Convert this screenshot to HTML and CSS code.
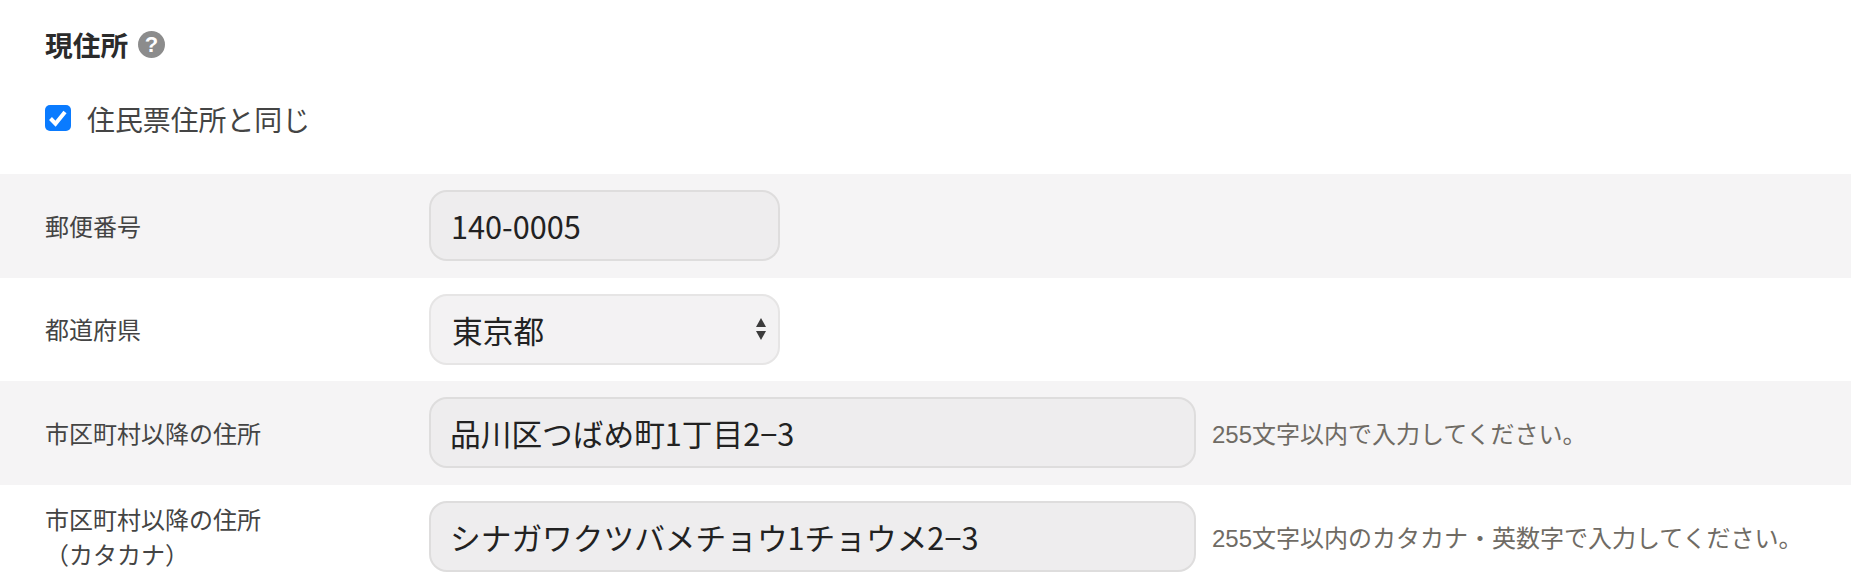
FILE: index.html
```html
<!DOCTYPE html>
<html lang="ja">
<head>
  <meta charset="UTF-8" />
  <title>現住所</title>
  <link rel="stylesheet" href="styles.css">
</head>
<body>

  <div class="section-head">
    <h2>現住所</h2>
    <span class="help">?</span>
  </div>

  <label class="same-check">
    <span class="check-box">
      <svg viewBox="0 0 26 26" width="26" height="26"><path d="M5.5 13.5l5 5.2 9.5-11.7" fill="none" stroke="#fff" stroke-width="4"/></svg>
    </span>
    <span class="check-text">住民票住所と同じ</span>
  </label>

  <div class="row row-shaded">
    <div class="row-label">郵便番号</div>
    <input class="field field-short" type="text" value="140-0005" readonly />
  </div>

  <div class="row">
    <div class="row-label">都道府県</div>
    <div class="select-wrap">
      <select class="field field-select">
        <option>東京都</option>
      </select>
      <svg class="select-arrows" viewBox="0 0 12 24" width="12" height="24"><path d="M6 1l5 9H1zM1 14h10l-5 9z" fill="#3c3c3c"/></svg>
    </div>
  </div>

  <div class="row row-shaded">
    <div class="row-label">市区町村以降の住所</div>
    <input class="field field-long" type="text" value="品川区つばめ町1丁目2−3" readonly />
    <span class="hint">255文字以内で入力してください。</span>
  </div>

  <div class="row">
    <div class="row-label">市区町村以降の住所<br>（カタカナ）</div>
    <input class="field field-long" type="text" value="シナガワクツバメチョウ1チョウメ2−3" readonly />
    <span class="hint">255文字以内のカタカナ・英数字で入力してください。</span>
  </div>

</body>
</html>
```

FILE: styles.css
```css
* {
  box-sizing: border-box;
  margin: 0;
  padding: 0;
  font-family: "Noto Sans CJK JP", "Noto Sans", sans-serif;
}

body {
  background: #fff;
  height: 588px;
  overflow: hidden;
}

.section-head {
  display: flex;
  align-items: center;
  gap: 10px;
  height: 88px;
  padding-left: 45px;
}

h2 {
  font-size: 27.7px;
  font-weight: 700;
  color: #2b2b2b;
}

.help {
  width: 27px;
  height: 27px;
  border-radius: 50%;
  background: #8c8c8c;
  color: #fff;
  font-family: "Liberation Sans", sans-serif;
  font-size: 22px;
  font-weight: 700;
  line-height: 27px;
  text-align: center;
}

.same-check {
  display: flex;
  align-items: center;
  gap: 16px;
  height: 60px;
  margin-bottom: 26px;
  padding-left: 45px;
  font-size: 27.9px;
  color: #444;
}

.check-text {
  padding-top: 2px;
}

.check-box {
  width: 26px;
  height: 26px;
  border-radius: 5px;
  background: #0a7bff;
}

.check-box svg {
  display: block;
}

.row {
  display: flex;
  align-items: center;
  height: 103.6px;
  padding-left: 45px;
}

.row-shaded {
  background: #f5f4f5;
}

.row-label {
  width: 384px;
  margin-top: -1px;
  font-size: 24px;
  line-height: 35px;
  color: #444;
}

.field {
  height: 71px;
  border: 2px solid #dedddd;
  border-radius: 18px;
  background: #eeedee;
  color: #222;
  font-size: 30.7px;
  padding: 0 20px;
  outline: none;
}

.field-short {
  width: 351px;
}

.field-long {
  width: 767px;
  padding: 0 19px;
}

.select-wrap {
  position: relative;
  width: 351px;
}

.field-select {
  width: 100%;
  appearance: none;
  padding: 0 21px;
  background: #f3f2f3;
  border-color: #e6e5e5;
}

.select-arrows {
  position: absolute;
  top: 23px;
  right: 13px;
}

.hint {
  margin-left: 16px;
  font-family: "Liberation Sans", "Noto Sans CJK JP", sans-serif;
  font-size: 24px;
  color: #6f6b64;
}
```
